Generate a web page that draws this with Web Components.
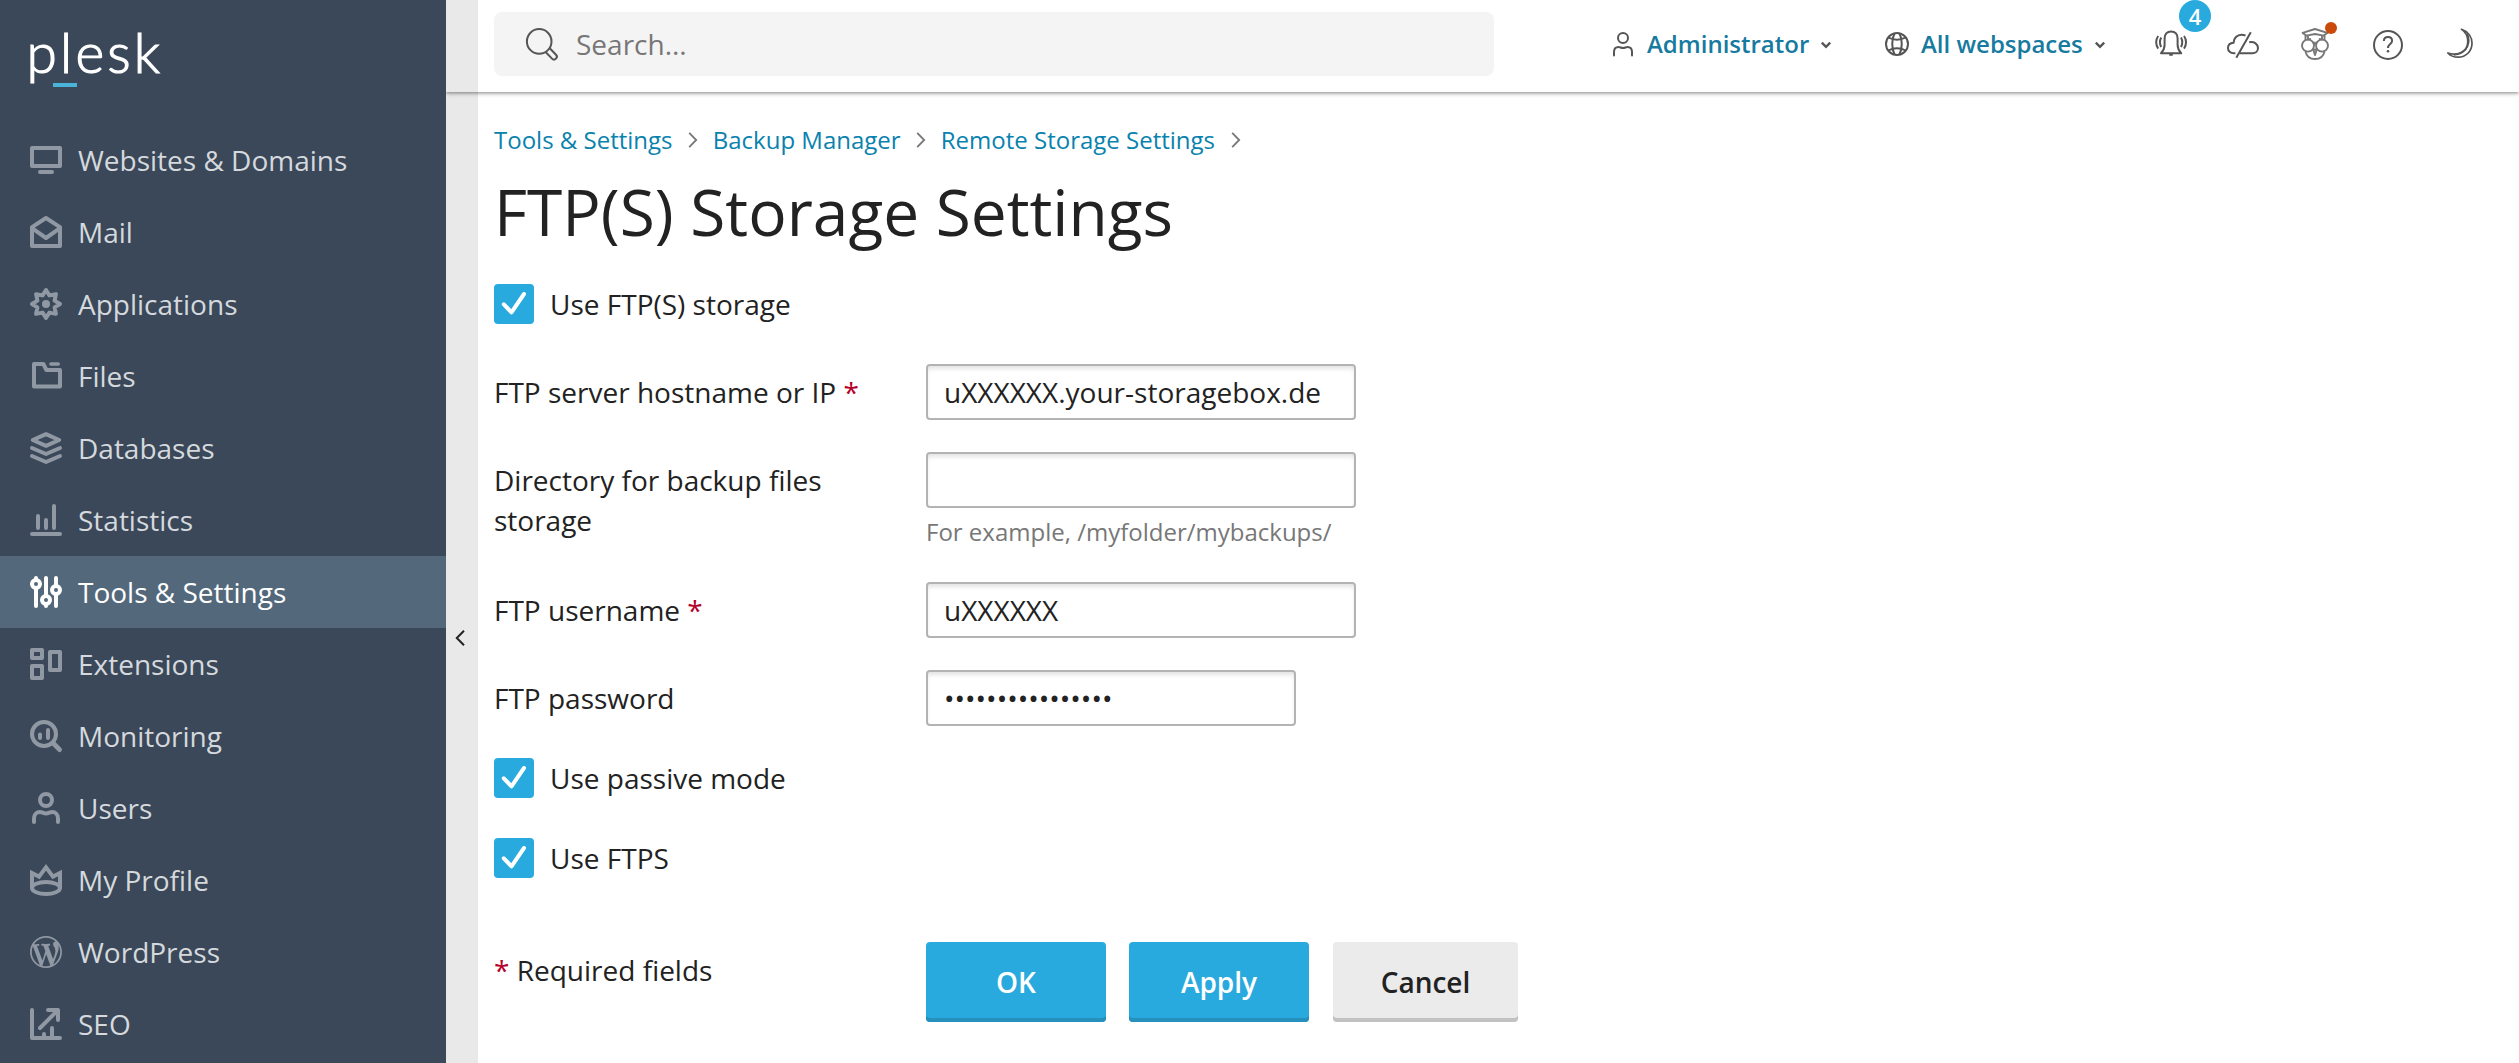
<!DOCTYPE html>
<html lang="en">
<head>
<meta charset="utf-8">
<title>FTP(S) Storage Settings</title>
<style>
html,body{margin:0;height:100%;overflow:hidden;background:#fff}
body{font:28px/40px "Open Sans","Noto Sans",sans-serif;color:#222}
</style>
</head>
<body>
<plesk-app>
  <plesk-sidebar slot="sidebar">
    <nav-item icon="monitor">Websites &amp; Domains</nav-item>
    <nav-item icon="mail">Mail</nav-item>
    <nav-item icon="gear">Applications</nav-item>
    <nav-item icon="folder">Files</nav-item>
    <nav-item icon="layers">Databases</nav-item>
    <nav-item icon="chart">Statistics</nav-item>
    <nav-item icon="sliders" active>Tools &amp; Settings</nav-item>
    <nav-item icon="blocks">Extensions</nav-item>
    <nav-item icon="monitoring">Monitoring</nav-item>
    <nav-item icon="user">Users</nav-item>
    <nav-item icon="crown">My Profile</nav-item>
    <nav-item icon="wordpress">WordPress</nav-item>
    <nav-item icon="seo">SEO</nav-item>
  </plesk-sidebar>
  <plesk-header slot="header"></plesk-header>
  <bread-crumbs><a>Tools &amp; Settings</a><a>Backup Manager</a><a>Remote Storage Settings</a></bread-crumbs>
  <page-title>FTP(S) Storage Settings</page-title>
  <check-box style="margin-bottom:40px">Use FTP(S) storage</check-box>
  <form-row label="FTP server hostname or IP" required><text-box>uXXXXXX.your-storagebox.de</text-box></form-row>
  <form-row label="Directory for backup files storage" hint="For example, /myfolder/mybackups/"><text-box></text-box></form-row>
  <form-row label="FTP username" required><text-box>uXXXXXX</text-box></form-row>
  <form-row label="FTP password"><text-box style="width:370px">••••••••••••••••</text-box></form-row>
  <check-box style="margin-bottom:40px">Use passive mode</check-box>
  <check-box>Use FTPS</check-box>
  <form-footer>
    <push-button primary style="width:180px">OK</push-button>
    <push-button primary style="width:180px">Apply</push-button>
    <push-button style="width:185px;margin-left:1px">Cancel</push-button>
  </form-footer>
</plesk-app>
<script>
const ICONS = {
  monitor: ['0 0 16 16', '<g fill="none" stroke="currentColor" stroke-width="2" stroke-linejoin="round" stroke-linecap="round"><path d="M1 2h14v9H1zM5 14h6"/></g>'],
  mail: ['0 0 16 16', '<g fill="none" stroke="currentColor" stroke-width="2" stroke-linejoin="round"><path d="M1 5.600 8 1l7 4.600V15H1zM1 6.100 8 11l7-4.900"/></g>'],
  gear: ['0 0 16 16', '<path d="M8 1 9.700 3.700 12.950 3.050 12.300 6.300 15 8 12.300 9.700 12.950 12.950 9.700 12.300 8 15 6.300 12.300 3.050 12.950 3.700 9.700 1 8 3.700 6.300 3.050 3.050 6.300 3.700z" fill="none" stroke="currentColor" stroke-width="2" stroke-linejoin="round"/><circle cx="8" cy="8" r="2" fill="currentColor"/>'],
  folder: ['0 0 16 16', '<g fill="none" stroke="currentColor" stroke-width="2" stroke-linejoin="round"><path d="M2 2h4.700l1.500 3H15v8.200H2z"/><path d="M10.500 2h3.600" stroke-width="1.800" stroke-linecap="round"/></g>'],
  layers: ['0 0 16 16', '<g fill="none" stroke="currentColor" stroke-width="2" stroke-linejoin="round" stroke-linecap="round"><path d="M8 1.100 14.600 4 8 6.900 1.400 4zM1 8l7 3 7-3M1 12l7 3 7-3"/></g>'],
  chart: ['0 0 16 16', '<g fill="none" stroke="currentColor" stroke-width="2" stroke-linecap="round"><path d="M1 15h14M4 6v6M8 8v4M12 1v11"/></g>'],
  sliders: ['0 0 16 16', '<g fill="none" stroke="currentColor" stroke-width="2" stroke-linecap="round"><path d="M3 1v.5M3 6v9M8 1v8M8 14.500v.5M13 1v4M13 9v6"/><circle cx="3" cy="4" r="2"/><circle cx="8" cy="12" r="2"/><circle cx="13" cy="7" r="2"/></g>'],
  blocks: ['0 0 16 16', '<g fill="none" stroke="currentColor" stroke-width="2" stroke-linejoin="round"><path d="M1 1h5v4H1zM1 9h5v6H1zM10 2h5v9h-5z"/></g>'],
  monitoring: ['0 0 16 16', '<g fill="none" stroke="currentColor" stroke-width="2" stroke-linecap="round"><circle cx="7" cy="7" r="6"/><path d="M5 7.200V9M9 5v4"/><path d="m12 12 2.800 2.800" stroke-width="2.400"/></g>'],
  user: ['0 0 16 16', '<g fill="none" stroke="currentColor" stroke-width="2" stroke-linecap="round"><circle cx="8" cy="4" r="3"/><path d="M2 15v-1.800C2 11.300 3.200 10 5 10c1 0 1.700.700 3 .700S10 10 11 10c1.800 0 3 1.300 3 3.200V15"/></g>'],
  crown: ['0 0 16 16', '<g fill="none" stroke="currentColor" stroke-width="2"><path d="M1 12V4.500l3.500 1.800L8 1.700l3.500 4.600L15 4.500V12"/><ellipse cx="8" cy="12" rx="7" ry="3"/></g>'],
  wordpress: ['0 0 20 20', '<path fill="currentColor" d="M20 10c0-5.510-4.490-10-10-10C4.480 0 0 4.490 0 10c0 5.520 4.480 10 10 10 5.510 0 10-4.480 10-10zM7.780 15.370L4.370 6.220c.55-.02 1.170-.08 1.170-.08.5-.06.44-1.130-.06-1.110 0 0-1.450.11-2.370.11-.18 0-.37 0-.58-.01C4.120 2.690 6.870 1.110 10 1.110c2.330 0 4.450.87 6.050 2.340-.68-.11-1.650.39-1.650 1.580 0 .74.45 1.360.9 2.100.35.61.55 1.360.55 2.460 0 1.490-1.400 5-1.400 5l-3.030-8.370c.54-.02.82-.17.82-.17.5-.05.44-1.250-.06-1.220 0 0-1.440.12-2.380.12-.87 0-2.330-.12-2.330-.12-.5-.03-.56 1.200-.06 1.220l.92.08 1.260 3.410zM17.410 10c.24-.64.74-1.870.43-4.250.7 1.290 1.050 2.710 1.050 4.250 0 3.290-1.730 6.240-4.400 7.780.97-2.590 1.940-5.200 2.920-7.780zM6.100 18.090C3.120 16.650 1.110 13.530 1.110 10c0-1.300.23-2.480.72-3.590C3.250 10.300 4.670 14.200 6.100 18.090zm4.030-6.630l2.580 6.980c-.86.29-1.760.45-2.710.45-.79 0-1.570-.11-2.290-.33.81-2.380 1.620-4.740 2.420-7.100z"/>'],
  seo: ['0 0 16 16', '<g fill="none" stroke="currentColor" stroke-width="2" stroke-linecap="round" stroke-linejoin="round"><path d="M1 1v14h14M9 1h5v5M14 1 5 10M7 13v1M11 10v4"/></g>'],
  search: ['0 0 32 32', '<g fill="none" stroke="currentColor" stroke-width="2"><circle cx="13.200" cy="13.400" r="12.300"/><path d="M19.800 24.200 26 30.600a2.600 2.600 0 0 0 4-3.900L24 20.500" stroke-linejoin="round"/></g>'],
  person: ['0 0 24 24', '<g fill="none" stroke="currentColor" stroke-width="2" stroke-linecap="round"><circle cx="12" cy="6" r="5"/><path d="M3 23.500V20c0-3.200 1.800-5 4.500-5 1.700 0 2.500 1 4.500 1s2.800-1 4.500-1c2.700 0 4.500 1.800 4.500 5v3.500"/></g>'],
  globe: ['0 0 24 24', '<g fill="none" stroke="currentColor" stroke-width="2"><circle cx="12" cy="12" r="11"/><path d="M9.500 1.500C6.500 7.500 6.500 16.500 9.500 22.500M14.500 1.500c3 6 3 15 0 21M3.500 5.500c5 3 12 3 17 0M3.500 18.500c5-3 12-3 17 0"/></g>'],
  bell: ['0 0 32 32', '<g fill="none" stroke="currentColor" stroke-width="2"><path d="M6 25.200c2.500-2.600 3.600-4.500 3.600-8.200v-6.500c0-4.500 2.700-7.100 6.500-7.100s6.500 2.600 6.500 7.100V17c0 3.700 1.100 5.600 3.600 8.200zM14.200 26.700h3.600" stroke-linejoin="round"/><path d="M6.200 9.500c-1.600 3-1.600 6.600 0 9.400M3.200 8C.500 11.600.500 16.900 3.200 20.600M26 9.500c1.600 3 1.600 6.600 0 9.400M29 8c2.700 3.600 2.700 8.900 0 12.600"/></g>'],
  cloud: ['0 0 32 32', '<g fill="none" stroke="currentColor" stroke-width="2"><path d="M8.400 25.300H7c-3.600 0-6-2.200-6-5.300 0-2.800 2.100-5 5.600-5.300C6.800 10 10 6.700 14.500 6.700c1.600 0 3 .4 4 1M22.200 14.300c5.200-.9 8.800 1.700 8.800 5.700 0 3.100-2.500 5.300-5.500 5.300H12.500" stroke-linejoin="round"/><path d="M23.800 4.300 9.300 29.700"/></g>'],
  owl: ['0 0 32 32', '<g fill="none" stroke="currentColor" stroke-width="1.900" stroke-linejoin="round"><path d="M3.600 4.900 16 1l12.400 3.900-3.800 2.700L16 6 7.400 7.600zM6.500 7.500V12.500M25.500 7.500V12.500M9 8v3.500L12 11M23 8v3.500L20 11"/><circle cx="9" cy="17.600" r="6"/><circle cx="23" cy="17.600" r="6"/><path d="M14.200 14 16 16l1.800-2M6.500 23.600C7.500 28.300 11 31 16 31s8.500-2.700 9.500-7.400M14.300 21.500 16 27l1.700-5.500z"/></g>'],
  help: ['0 0 32 32', '<circle cx="17" cy="17" r="14" fill="none" stroke="currentColor" stroke-width="2"/><path d="M12.900 13c0-2.400 1.700-4 4.100-4s4.100 1.500 4.100 3.800c0 3.300-4.100 3.300-4.100 7.200" fill="none" stroke="currentColor" stroke-width="2"/><circle cx="17" cy="23.300" r="1.300" fill="currentColor"/>'],
  moon: ['0 0 32 32', '<g fill="none" stroke="currentColor" stroke-width="1.700" stroke-linejoin="round"><path d="M18.500 1.400C25.500 3.600 29 9.300 29 15.300 29 23.300 22.800 29.200 15.300 29.200c-4.300 0-8.200-1.600-10.500-4.200 8.700 3 20-.6 20-11.500 0-5-2.500-9.600-6.200-12.100z"/><path d="M24 5.500c3.700 7.500 1.800 20-13 21.500"/></g>'],
  caret: ['0 0 10 10', '<path d="m.8 2.600 4.200 4.200 4.200-4.200" fill="none" stroke="currentColor" stroke-width="2.300"/>'],
  next: ['0 0 10 16', '<path d="m1.200.8 7 7.200-7 7.200" fill="none" stroke="currentColor" stroke-width="1.800"/>'],
  back: ['0 0 10 16', '<path d="M9 .8 1.800 8 9 15.200" fill="none" stroke="currentColor" stroke-width="2"/>'],
  tick: ['0 0 40 40', '<path d="m9.800 20.300 7.700 8L30 10" fill="none" stroke="#fff" stroke-width="4" stroke-linecap="round" stroke-linejoin="round"/>']
};
const define = (name, render) => customElements.define(name, class extends HTMLElement {
  constructor() {
    super();
    this.attachShadow({ mode: 'open' });
  }
  connectedCallback() {
    this.shadowRoot.innerHTML = render(this);
  }
});

define('ui-icon', el => {
  const [box, art] = ICONS[el.getAttribute('name')];
  return `<style>:host{display:block;flex:none;width:32px;height:32px}svg{display:block;width:100%;height:100%;overflow:visible}</style>
    <svg viewBox="${box}">${art}</svg>`;
});

define('plesk-app', () => `<style>
  :host{display:flex;height:100vh;overflow:hidden}
  .side{width:446px;flex:none}
  .right{flex:1;display:flex;flex-direction:column;min-width:0;background:linear-gradient(to right,#e9e9e9 32px,#fff 32px)}
  .body{flex:1;display:flex;min-height:0}
  .gutter{width:32px;flex:none;color:#222;padding-top:538px;box-sizing:border-box}
  .gutter ui-icon{width:10px;height:16px;margin-left:8.500px}
  main{flex:1;padding:30px 16px 0;display:flex;flex-direction:column}
  </style>
  <div class="side"><slot name="sidebar"></slot></div>
  <div class="right"><slot name="header"></slot>
    <div class="body"><div class="gutter"><ui-icon name="back"></ui-icon></div><main><slot></slot></main></div>
  </div>`);

define('plesk-logo', () => `<style>:host{display:block;height:124px}svg{display:block}text{font:300 55px Lato,sans-serif;fill:#fff;stroke:#fff;stroke-width:1.200px}</style>
  <svg width="200" height="124"><text x="26.500" y="73" textLength="133.500">plesk</text><path d="M53 83h24v4H53z" fill="#4ab3d7"/></svg>`);

define('plesk-sidebar', () => `<style>:host{display:flex;flex-direction:column;height:100vh;overflow:hidden;background:#3a4859}</style>
  <plesk-logo></plesk-logo><slot></slot>`);

define('nav-item', el => `<style>
  :host{display:flex;align-items:center;flex:none;height:72px;padding-left:30px;gap:16px;color:#d5d9dd}
  ui-icon{color:#9098a3}
  :host([active]){background:#53687b;color:#fff}
  :host([active]) ui-icon{color:#fff}
  </style><ui-icon name="${el.getAttribute('icon')}"></ui-icon><span><slot></slot></span>`);

define('header-menu', el => `<style>
  :host{display:flex;align-items:center;width:220px;gap:12px;font-weight:600;font-size:24px;line-height:36px;color:#177a9f;white-space:nowrap}
  ui-icon{width:24px;height:24px;color:#555}
  .caret{width:10px;height:10px;margin-left:auto;margin-top:2px}
  </style><ui-icon name="${el.getAttribute('icon')}"></ui-icon><span><slot></slot></span><ui-icon class="caret" name="caret"></ui-icon>`);

define('plesk-header', () => `<style>
  :host{display:flex;align-items:center;flex:none;height:92px;padding:0 44px 4px 48px;box-sizing:border-box;color:#555;background:linear-gradient(to right,#e9e9e9 32px,#fff 32px);box-shadow:0 1px 4px rgba(0,0,0,.5);clip-path:inset(0 0 -12px 0)}
  .search{display:flex;align-items:center;width:1000px;height:64px;box-sizing:border-box;padding-left:32px;gap:18px;background:#f4f4f4;border-radius:8px;color:#777}
  .search ui-icon{color:#555}
  header-menu:first-of-type{margin-left:auto;margin-right:54px}
  .tools{display:flex;gap:40px;margin-left:50px}
  .tools div{position:relative}
  .badge{position:absolute;left:24px;top:-28px;width:32px;height:32px;border-radius:50%;background:#28aade;color:#fff;font:600 22px/33px "Open Sans",sans-serif;text-align:center}
  .dot{position:absolute;left:26px;top:-6px;width:12px;height:12px;border-radius:50%;background:#c94a0a}
  .owl{color:#777}
  </style>
  <div class="search"><ui-icon name="search"></ui-icon><span>Search...</span></div>
  <header-menu icon="person">Administrator</header-menu>
  <header-menu icon="globe">All webspaces</header-menu>
  <div class="tools">
    <div><ui-icon name="bell"></ui-icon><span class="badge">4</span></div>
    <ui-icon name="cloud"></ui-icon>
    <div><ui-icon class="owl" name="owl"></ui-icon><span class="dot"></span></div>
    <ui-icon name="help"></ui-icon>
    <ui-icon name="moon"></ui-icon>
  </div>`);

define('bread-crumbs', el => `<style>
  :host{display:flex;gap:14.400px;font-size:24px;line-height:36px;color:#0a82ae}
  span{display:flex;align-items:center;gap:15.800px}
  ui-icon{width:10px;height:16px;color:#777}
  </style>${[...el.querySelectorAll('a')].map(a => `<span>${a.innerHTML}<ui-icon name="next"></ui-icon></span>`).join('')}`);

define('page-title', () => `<style>:host{display:block;margin:14px 0 32px}h1{font-weight:400;font-size:64px;line-height:80px;margin:0}</style><h1><slot></slot></h1>`);

define('check-box', () => `<style>:host{display:flex;gap:16px}i{width:40px;height:40px;border-radius:4px;background:#28aade}ui-icon{width:40px;height:40px}</style>
  <i><ui-icon name="tick"></ui-icon></i><span><slot></slot></span>`);

define('text-box', () => `<style>:host{display:block;box-sizing:border-box;width:430px;height:56px;padding:6px 16px;border:2px solid #b3b3b3;border-radius:4px;box-shadow:inset 0 4px 4px -1px #e4e4e4;background:#fff;white-space:nowrap}</style><slot></slot>`);

define('form-row', el => `<style>
  :host{display:flex;margin-bottom:32px}
  .label{width:384px;margin-right:48px;padding-top:8px;box-sizing:border-box}
  b{font-weight:400;color:#b5002b}
  .hint{font-size:24px;line-height:36px;color:#777;margin-top:6px}
  </style><div class="label">${el.getAttribute('label')}${el.hasAttribute('required') ? ' <b>*</b>' : ''}</div>
  <div><slot></slot>${el.hasAttribute('hint') ? `<div class="hint">${el.getAttribute('hint')}</div>` : ''}</div>`);

define('form-footer', () => `<style>
  :host{display:flex;margin-top:64px}
  .note{width:432px;padding-top:8px;box-sizing:border-box}
  b{font-weight:400;color:#b5002b}
  .actions{display:flex;gap:23px}
  </style><div class="note"><b>*</b> Required fields</div><div class="actions"><slot></slot></div>`);

define('push-button', () => `<style>
  :host{display:block;height:80px;box-sizing:border-box;padding-top:20px;border-radius:4px;text-align:center;font-weight:600;background:#ebebeb;box-shadow:inset 0 -4px #c1c1c1}
  :host([primary]){background:#28aade;color:#fff;box-shadow:inset 0 -4px #2590bb}
  </style><slot></slot>`);
</script>
</body>
</html>
